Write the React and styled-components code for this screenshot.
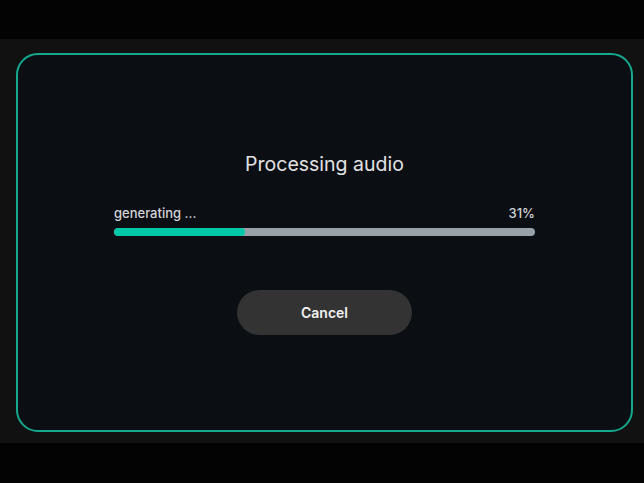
import React from "react";
import styled, { createGlobalStyle } from "styled-components";

const Global = createGlobalStyle`
  html, body { margin: 0; padding: 0; background: #030303; }
  body { font-family: Inter, "Noto Sans", sans-serif; }
`;

const Page = styled.div`
  width: 644px;
  height: 483px;
  display: flex;
  flex-direction: column;
  background: #030303;
`;

const Band = styled.div`
  margin-top: 39px;
  height: 404px;
  box-sizing: border-box;
  background: #111111;
  padding: 14px 11px 11px 16px;
  display: flex;
`;

const Card = styled.div`
  flex: 1;
  box-sizing: border-box;
  border: 2px solid #14a88f;
  border-radius: 22px;
  background: #0b0e13;
  display: flex;
  flex-direction: column;
  align-items: center;
  justify-content: center;
  padding-top: 1px;
`;

const Title = styled.h2`
  margin: 0 0 29px;
  font-size: 19.5px;
  font-weight: 400;
  color: #e2e2e4;
  line-height: 24px;
`;

const Progress = styled.div`
  width: 421px;
  display: flex;
  flex-direction: column;
  gap: 7px;
`;

const Labels = styled.div`
  display: flex;
  justify-content: space-between;
  font-size: 13px;
  font-weight: 500;
  line-height: 16px;
  color: #d4d4d8;
`;

const Track = styled.div`
  height: 8px;
  border-radius: 4px;
  background: #9aa0aa;
  overflow: hidden;
`;

const Fill = styled.div`
  height: 100%;
  border-radius: 4px;
  background: #00c9a7;
`;

const Button = styled.button`
  margin-top: 54px;
  width: 175px;
  height: 45px;
  border: none;
  border-radius: 23px;
  background: #333333;
  color: #f2f2f2;
  font-family: Inter, "Noto Sans", sans-serif;
  font-size: 14px;
  font-weight: 600;
  cursor: pointer;
`;

export default function App() {
  const pct = 31;
  return (
    <>
      <Global />
      <Page>
        <Band>
          <Card>
            <Title>Processing audio</Title>
            <Progress>
              <Labels>
                <span>generating ...</span>
                <span>{pct}%</span>
              </Labels>
              <Track>
                <Fill style={{ width: `${pct}%` }} />
              </Track>
            </Progress>
            <Button>Cancel</Button>
          </Card>
        </Band>
      </Page>
    </>
  );
}
